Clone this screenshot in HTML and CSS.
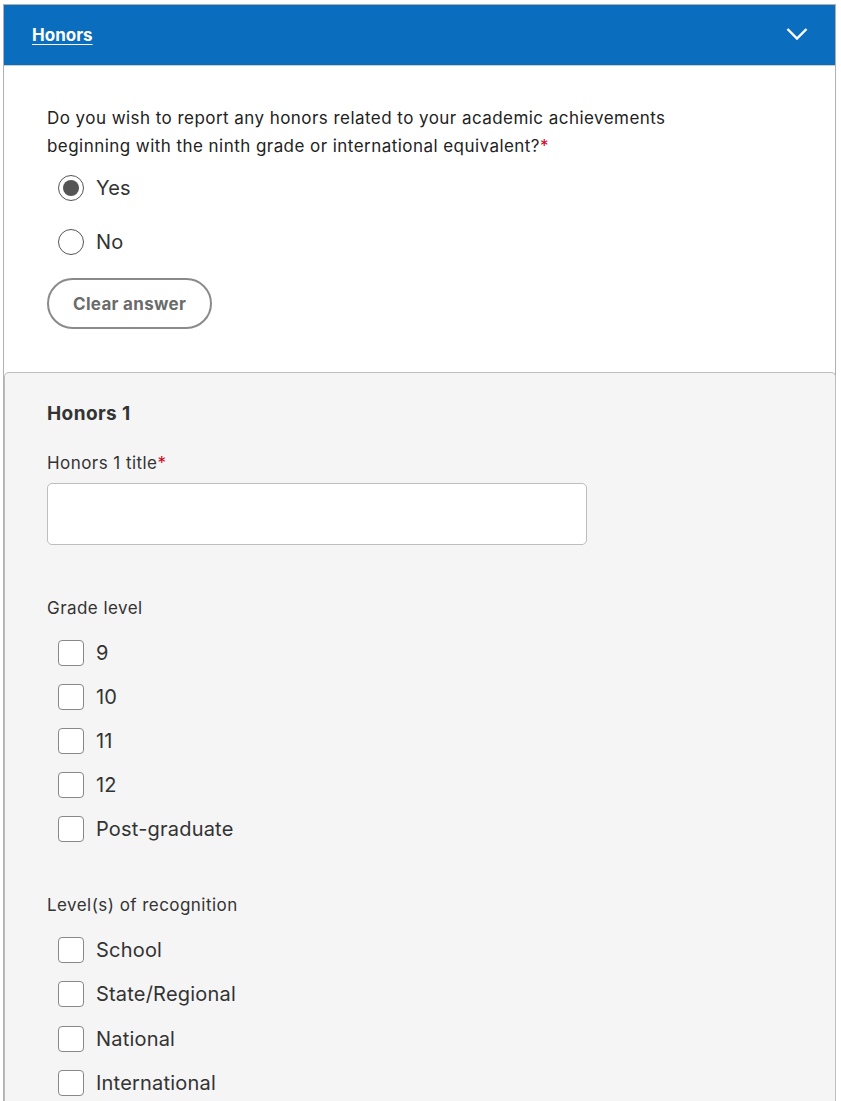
FILE: index.html
```html
<!DOCTYPE html>
<html>
<head>
<meta charset="utf-8">
<link rel="stylesheet" href="styles.css">
</head>
<body>
<div class="section">
  <div class="header">
    <a class="header-title" href="#">Honors</a>
    <svg class="chevron" width="22" height="14" viewBox="0 0 22 14"><path d="M1.5 2 L11 11.5 L20.5 2" fill="none" stroke="#fff" stroke-width="2.4"/></svg>
  </div>
  <div class="intro">
    <p class="question">Do you wish to report any honors related to your academic achievements beginning with the ninth grade or international equivalent?<span class="req">*</span></p>
    <div class="radios">
      <label class="radio-row"><span class="radio checked"></span><span class="opt">Yes</span></label>
      <label class="radio-row"><span class="radio"></span><span class="opt">No</span></label>
    </div>
    <button class="clear-btn">Clear answer</button>
  </div>
  <div class="panel">
    <h2 class="panel-title">Honors 1</h2>
    <div class="field-label">Honors 1 title<span class="req">*</span></div>
    <div class="text-input"></div>
    <div class="group-label">Grade level</div>
    <div class="checks">
      <div class="check-row"><span class="box"></span><span class="opt">9</span></div>
      <div class="check-row"><span class="box"></span><span class="opt">10</span></div>
      <div class="check-row"><span class="box"></span><span class="opt">11</span></div>
      <div class="check-row"><span class="box"></span><span class="opt">12</span></div>
      <div class="check-row"><span class="box"></span><span class="opt">Post-graduate</span></div>
    </div>
    <div class="group-label">Level(s) of recognition</div>
    <div class="checks">
      <div class="check-row"><span class="box"></span><span class="opt">School</span></div>
      <div class="check-row"><span class="box"></span><span class="opt">State/Regional</span></div>
      <div class="check-row"><span class="box"></span><span class="opt">National</span></div>
      <div class="check-row"><span class="box"></span><span class="opt">International</span></div>
    </div>
  </div>
</div>
</body>
</html>
```
FILE: styles.css
```css
html, body { margin: 0; padding: 0; background: #fff; }
body { font-family: "Inter", "Liberation Sans", sans-serif; color: #222; }
.section {
  margin: 4px 0 0 3px;
  width: 831px;
  border: 1px solid #b0b0b0;
  border-bottom: none;
}
.header {
  background: #0b6dbd;
  height: 60px;
  display: flex;
  align-items: center;
  justify-content: space-between;
  padding: 0 27px 0 28px;
}
.header-title {
  color: #fff;
  font-weight: 700;
  font-size: 17px;
  text-decoration: underline;
  text-underline-offset: 3px;
}
.chevron { display: block; margin-top: -3px; }
.intro { padding: 38px 44px 43px 43px; border-top: 1px solid #ccc; }
.question { margin: 0; font-size: 17px; letter-spacing: 0.45px; line-height: 28px; color: #222; max-width: 660px; }
.req { color: #d0021b; }
.radios { display: flex; flex-direction: column; gap: 28px; margin: 15px 0 0 11px; }
.radio-row { display: flex; align-items: center; gap: 12px; height: 26px; }
.radio {
  width: 24px; height: 24px; border: 1px solid #555; border-radius: 50%;
  box-sizing: content-box; position: relative; background: #fff;
}
.radio.checked::after {
  content: ""; position: absolute; left: 4px; top: 4px; width: 16px; height: 16px;
  border-radius: 50%; background: #555;
}
.opt { font-size: 20px; letter-spacing: 0.2px; color: #333; }
.clear-btn {
  margin-top: 23px;
  height: 51px; padding: 0 24px;
  border: 2px solid #8a8a8a; border-radius: 26px; background: #fff;
  font-family: inherit; font-weight: 700; font-size: 17px; letter-spacing: 0.3px; color: #6b6b6b;
}
.panel {
  background: #f5f5f5;
  border: 1px solid #bdbdbd;
  border-bottom: none;
  border-radius: 5px 5px 0 0;
  margin: 0 -1px 0 0;
  padding: 28px 43px 40px 42px;
}
.panel-title { margin: 0; font-size: 19px; letter-spacing: 0.4px; font-weight: 700; color: #333; line-height: 26px; }
.field-label { margin-top: 24px; font-size: 17px; letter-spacing: 0.45px; color: #333; line-height: 24px; }
.text-input {
  margin-top: 8px; width: 538px; height: 60px; background: #fff;
  border: 1px solid #bdbdbd; border-radius: 5px;
}
.group-label { margin-top: 51px; font-size: 17px; letter-spacing: 0.45px; color: #333; line-height: 24px; }
.checks { display: flex; flex-direction: column; gap: 18.1px; margin: 20px 0 0 11px; }
.check-row { display: flex; align-items: center; gap: 12px; height: 26px; }
.box {
  width: 24px; height: 24px; border: 1px solid #888; border-radius: 4px;
  background: #fff; box-sizing: content-box;
}
.checks + .group-label { margin-top: 51px; }
```
